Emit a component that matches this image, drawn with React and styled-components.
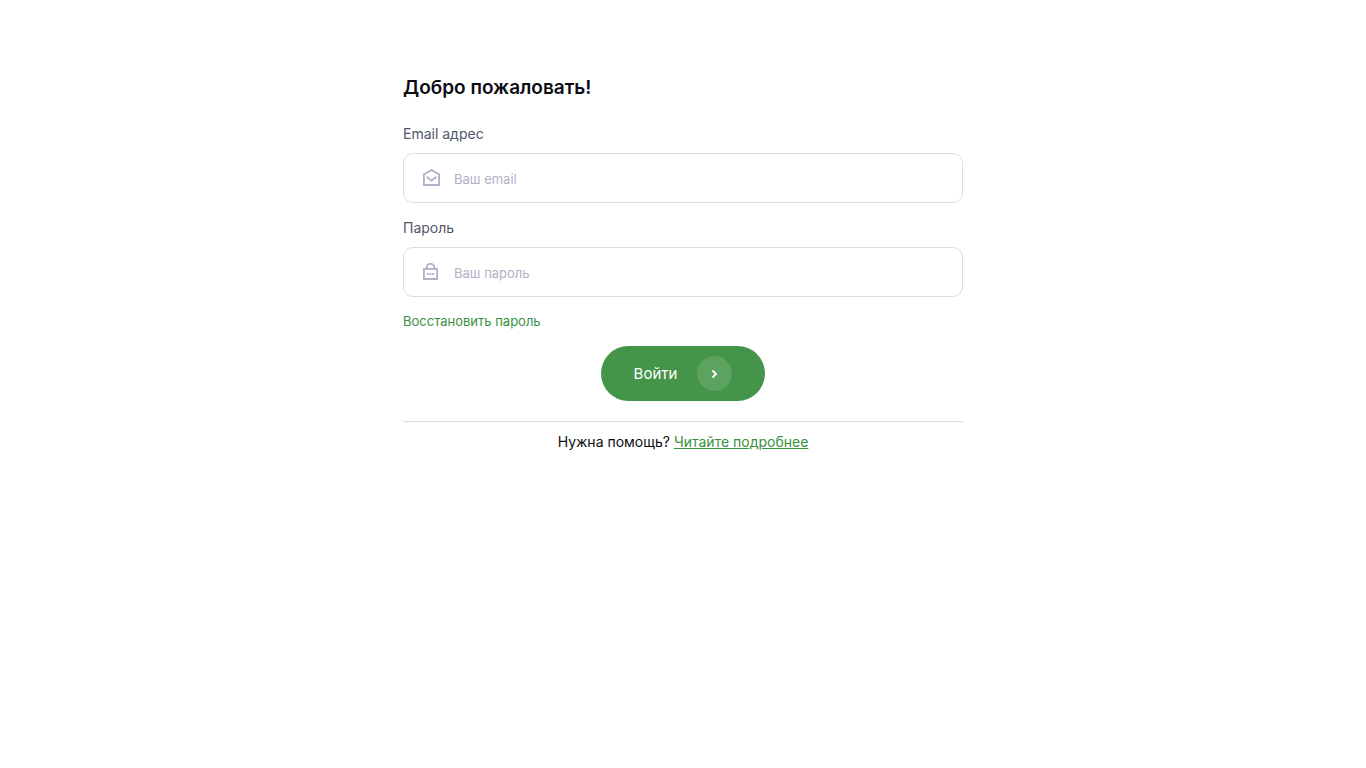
import React, { useState } from "react";
import styled, { createGlobalStyle } from "styled-components";

const GlobalStyle = createGlobalStyle`
  *, *::before, *::after {
    box-sizing: border-box;
  }

  body {
    margin: 0;
    background: #fff;
    color: #0d0c14;
    font-family: Inter, "Noto Sans", sans-serif;
    font-size: 14px;
    line-height: 20px;
  }
`;

const Page = styled.main`
  max-width: 592px;
  margin: 0 auto;
  padding: 72px 16px 32px;
`;

const Title = styled.h1`
  margin: 0 0 20px;
  font-size: 19px;
  font-weight: 600;
  line-height: 32px;
`;

const Fields = styled.div`
  display: grid;
  gap: 15px;
  margin-bottom: 14px;
`;

const Label = styled.label`
  display: block;
  margin-bottom: 9px;
  color: #50566b;
`;

const InputBox = styled.div`
  display: flex;
  align-items: center;
  height: 50px;
  padding: 0 18px;
  border: 1px solid #dddbe9;
  border-radius: 10px;

  &:focus-within {
    border-color: #449549;
  }

  svg {
    flex: none;
    margin-right: 13px;
  }
`;

const Input = styled.input`
  flex: 1;
  min-width: 0;
  height: 100%;
  padding: 2px 0 0;
  border: 0;
  outline: 0;
  background: transparent;
  color: #0d0c14;
  font: inherit;
  font-size: 13px;

  &::placeholder {
    color: #b3afc6;
    opacity: 1;
  }
`;

const RestoreLink = styled.a`
  display: block;
  width: fit-content;
  margin-bottom: 15px;
  color: #3a9140;
  font-size: 13px;
  text-decoration: none;
`;

const SubmitButton = styled.button`
  display: flex;
  align-items: center;
  gap: 20px;
  height: 55px;
  margin: 0 auto 20px;
  padding: 0 33px;
  border: 0;
  border-radius: 28px;
  background: #449549;
  color: #fff;
  font: inherit;
  font-size: 15px;
  cursor: pointer;

  &:hover {
    background: #3b8540;
  }
`;

const ArrowCircle = styled.span`
  display: flex;
  align-items: center;
  justify-content: center;
  width: 35px;
  height: 35px;
  border-radius: 50%;
  background: rgba(255, 255, 255, 0.13);
`;

const Help = styled.p`
  margin: 0;
  padding-top: 10px;
  border-top: 1px solid #dddde5;
  text-align: center;

  a {
    color: #3a9140;
  }
`;

function MailIcon() {
  return (
    <svg width="19" height="18" viewBox="0 0 19 18" fill="none" stroke="#b3afc6" strokeWidth="1.8" aria-hidden="true">
      <path d="M1.9 5.2 9.5 1.1l7.6 4.1V16H1.9Z" />
      <path d="m4.7 7.7 4.8 4 4.8-4" />
    </svg>
  );
}

function LockIcon() {
  return (
    <svg width="19" height="18" viewBox="0 0 19 18" fill="none" stroke="#b3afc6" strokeWidth="1.8" aria-hidden="true">
      <path d="M1.9 5.9h13.2V16H1.9z" />
      <path d="M4.6 5.9V4.7a3.9 3.9 0 0 1 7.8 0v1.2" />
      <path d="M4.9 11h1.8M7.6 11h1.8M10.3 11h1.8" strokeWidth="2" />
    </svg>
  );
}

export default function App() {
  const [email, setEmail] = useState("");
  const [password, setPassword] = useState("");

  return (
    <>
      <GlobalStyle />
      <Page>
        <Title>Добро пожаловать!</Title>
        <form onSubmit={(e) => e.preventDefault()}>
          <Fields>
            <div>
              <Label htmlFor="email">Email адрес</Label>
              <InputBox>
                <MailIcon />
                <Input
                  id="email"
                  type="email"
                  placeholder="Ваш email"
                  value={email}
                  onChange={(e) => setEmail(e.target.value)}
                />
              </InputBox>
            </div>
            <div>
              <Label htmlFor="password">Пароль</Label>
              <InputBox>
                <LockIcon />
                <Input
                  id="password"
                  type="password"
                  placeholder="Ваш пароль"
                  value={password}
                  onChange={(e) => setPassword(e.target.value)}
                />
              </InputBox>
            </div>
          </Fields>
          <RestoreLink href="#restore">Восстановить пароль</RestoreLink>
          <SubmitButton type="submit">
            Войти
            <ArrowCircle>
              <svg width="8" height="10" viewBox="0 0 8 10" fill="none" stroke="#fff" strokeWidth="2" aria-hidden="true">
                <path d="m1.5 1.5 3.5 3.5-3.5 3.5" />
              </svg>
            </ArrowCircle>
          </SubmitButton>
        </form>
        <Help>
          Нужна помощь? <a href="#help">Читайте подробнее</a>
        </Help>
      </Page>
    </>
  );
}
